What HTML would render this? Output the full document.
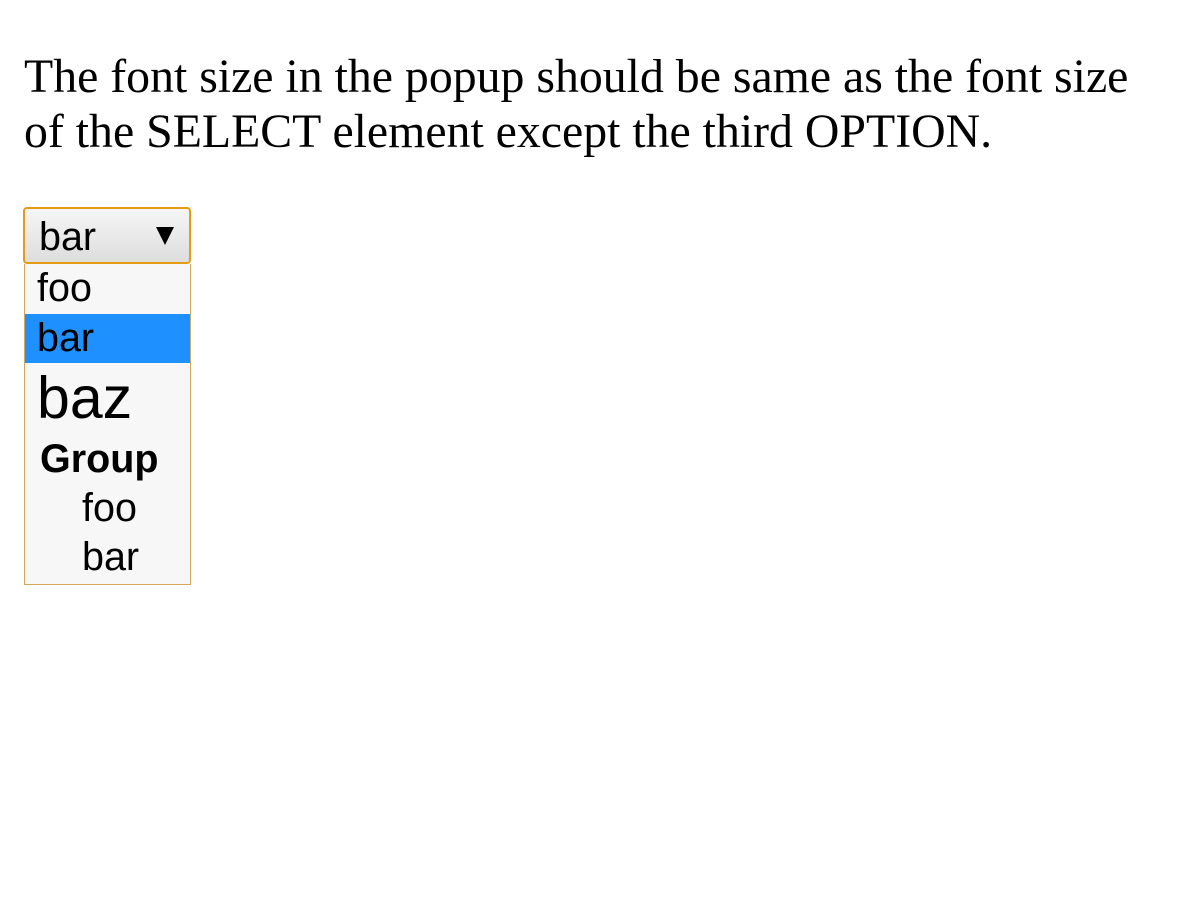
<!DOCTYPE html>
<html><head><style>
body{margin:0;width:1200px;height:900px;background:#fff;position:relative;overflow:hidden}
p{position:absolute;left:24px;top:49px;margin:0;font:47.8px/55px "Liberation Serif",serif;color:#000;white-space:nowrap}
.sel{position:absolute;left:23px;top:207px;width:164px;height:53px;border:2px solid #e59c14;border-radius:4px;background:linear-gradient(#f6f6f6,#dddddd);}
.sel span{position:absolute;left:14px;top:5px;font:39.5px/46px "Liberation Sans",sans-serif}
.tri{position:absolute;left:131px;top:18px;width:0;height:0;border-left:9px solid transparent;border-right:9px solid transparent;border-top:18px solid #000}
.pop{position:absolute;left:24px;top:264px;width:165px;height:320px;border:1px solid #d2a75a;border-top:none;background:#f7f7f7;font-family:"Liberation Sans",sans-serif}
.r{position:absolute;left:0;width:165px;font-size:39.5px;line-height:49px;box-sizing:border-box}
</style></head><body>
<p>The font size in the popup should be same as the font size<br>of the SELECT element except the third OPTION.</p>
<div class="sel"><span>bar</span><div class="tri"></div></div>
<div class="pop">
<div class="r" style="top:0;height:50px;padding-left:12px">foo</div>
<div class="r" style="top:50px;height:49px;background:#1e90ff;padding-left:12px">bar</div>
<div class="r" style="top:99px;height:70px;font-size:59px;line-height:70px;padding-left:12px">baz</div>
<div class="r" style="top:171px;height:50px;font-weight:bold;padding-left:15px">Group</div>
<div class="r" style="top:220px;height:50px;padding-left:57px">foo</div>
<div class="r" style="top:269px;height:50px;padding-left:57px">bar</div>
</div>
</body></html>
